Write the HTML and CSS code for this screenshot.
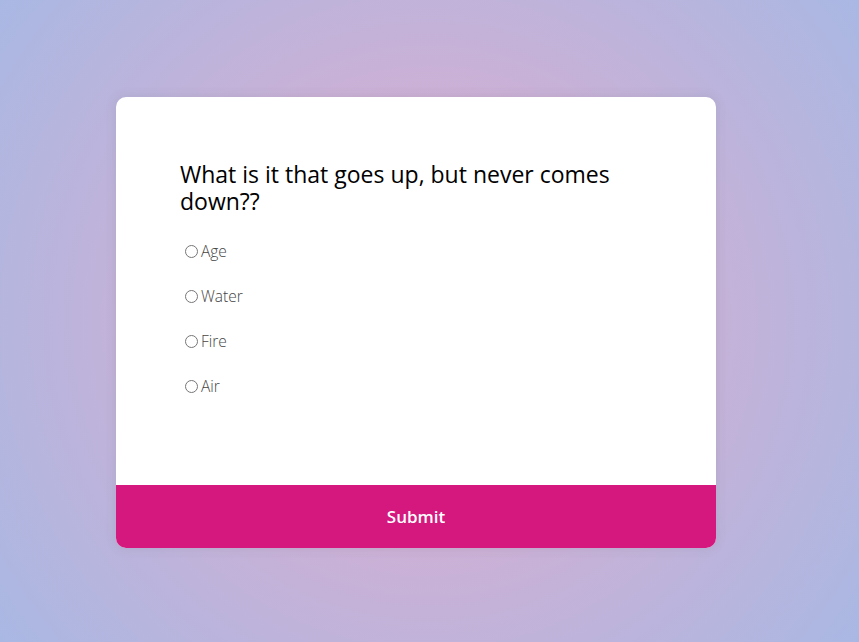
FILE: index.html
```html
<!DOCTYPE html>
<html lang="en">
<head>
<meta charset="UTF-8">
<title>Quiz</title>
<link rel="stylesheet" href="styles.css">
</head>
<body>
  <div class="quiz">
    <div class="quiz-header">
      <h2 class="question">What is it that goes up, but never comes down??</h2>
      <ul class="answers">
        <li class="answer"><input type="radio" name="a" id="a1" class="radio"><label for="a1" class="label">Age</label></li>
        <li class="answer"><input type="radio" name="a" id="a2" class="radio"><label for="a2" class="label">Water</label></li>
        <li class="answer"><input type="radio" name="a" id="a3" class="radio"><label for="a3" class="label">Fire</label></li>
        <li class="answer"><input type="radio" name="a" id="a4" class="radio"><label for="a4" class="label">Air</label></li>
      </ul>
    </div>
    <button class="submit">Submit</button>
  </div>
</body>
</html>
```
FILE: styles.css
```css
html, body {
  margin: 0;
  height: 100%;
}
body {
  background: radial-gradient(circle at 50% 50%, #d6acce 0%, #cdb0d5 40%, #a9b8e3 100%);
  font-family: "Open Sans", "Noto Sans", sans-serif;
  display: flex;
  align-items: center;
  padding-left: 116px;
  box-sizing: border-box;
}
.quiz {
  width: 600px;
  background: #fff;
  border-radius: 10px;
  box-shadow: 0 0 10px 2px rgba(100, 100, 100, 0.1);
  overflow: hidden;
  display: flex;
  flex-direction: column;
  margin-top: 3px;
}
.quiz-header {
  padding: 64px 64px 87px;
}
.question {
  margin: 0;
  font-size: 23px;
  line-height: 27px;
  font-weight: 400;
  color: #000;
}
.answers {
  list-style: none;
  padding: 0;
  margin: 24px 0 0;
  display: flex;
  flex-direction: column;
  gap: 21px;
}
.answer {
  display: flex;
  align-items: center;
  height: 24px;
  font-size: 15.5px;
  font-weight: 300;
  color: #444;
}
.radio {
  margin: 0 3px 0 5px;
  width: 13px;
  height: 13px;
}
.label {
  line-height: 24px;
}
.submit {
  height: 63px;
  border: none;
  background: #d5187e;
  color: #fff;
  font-family: "Open Sans", "Noto Sans", sans-serif;
  font-size: 17px;
  font-weight: 600;
  padding: 0;
  cursor: pointer;
}
```
